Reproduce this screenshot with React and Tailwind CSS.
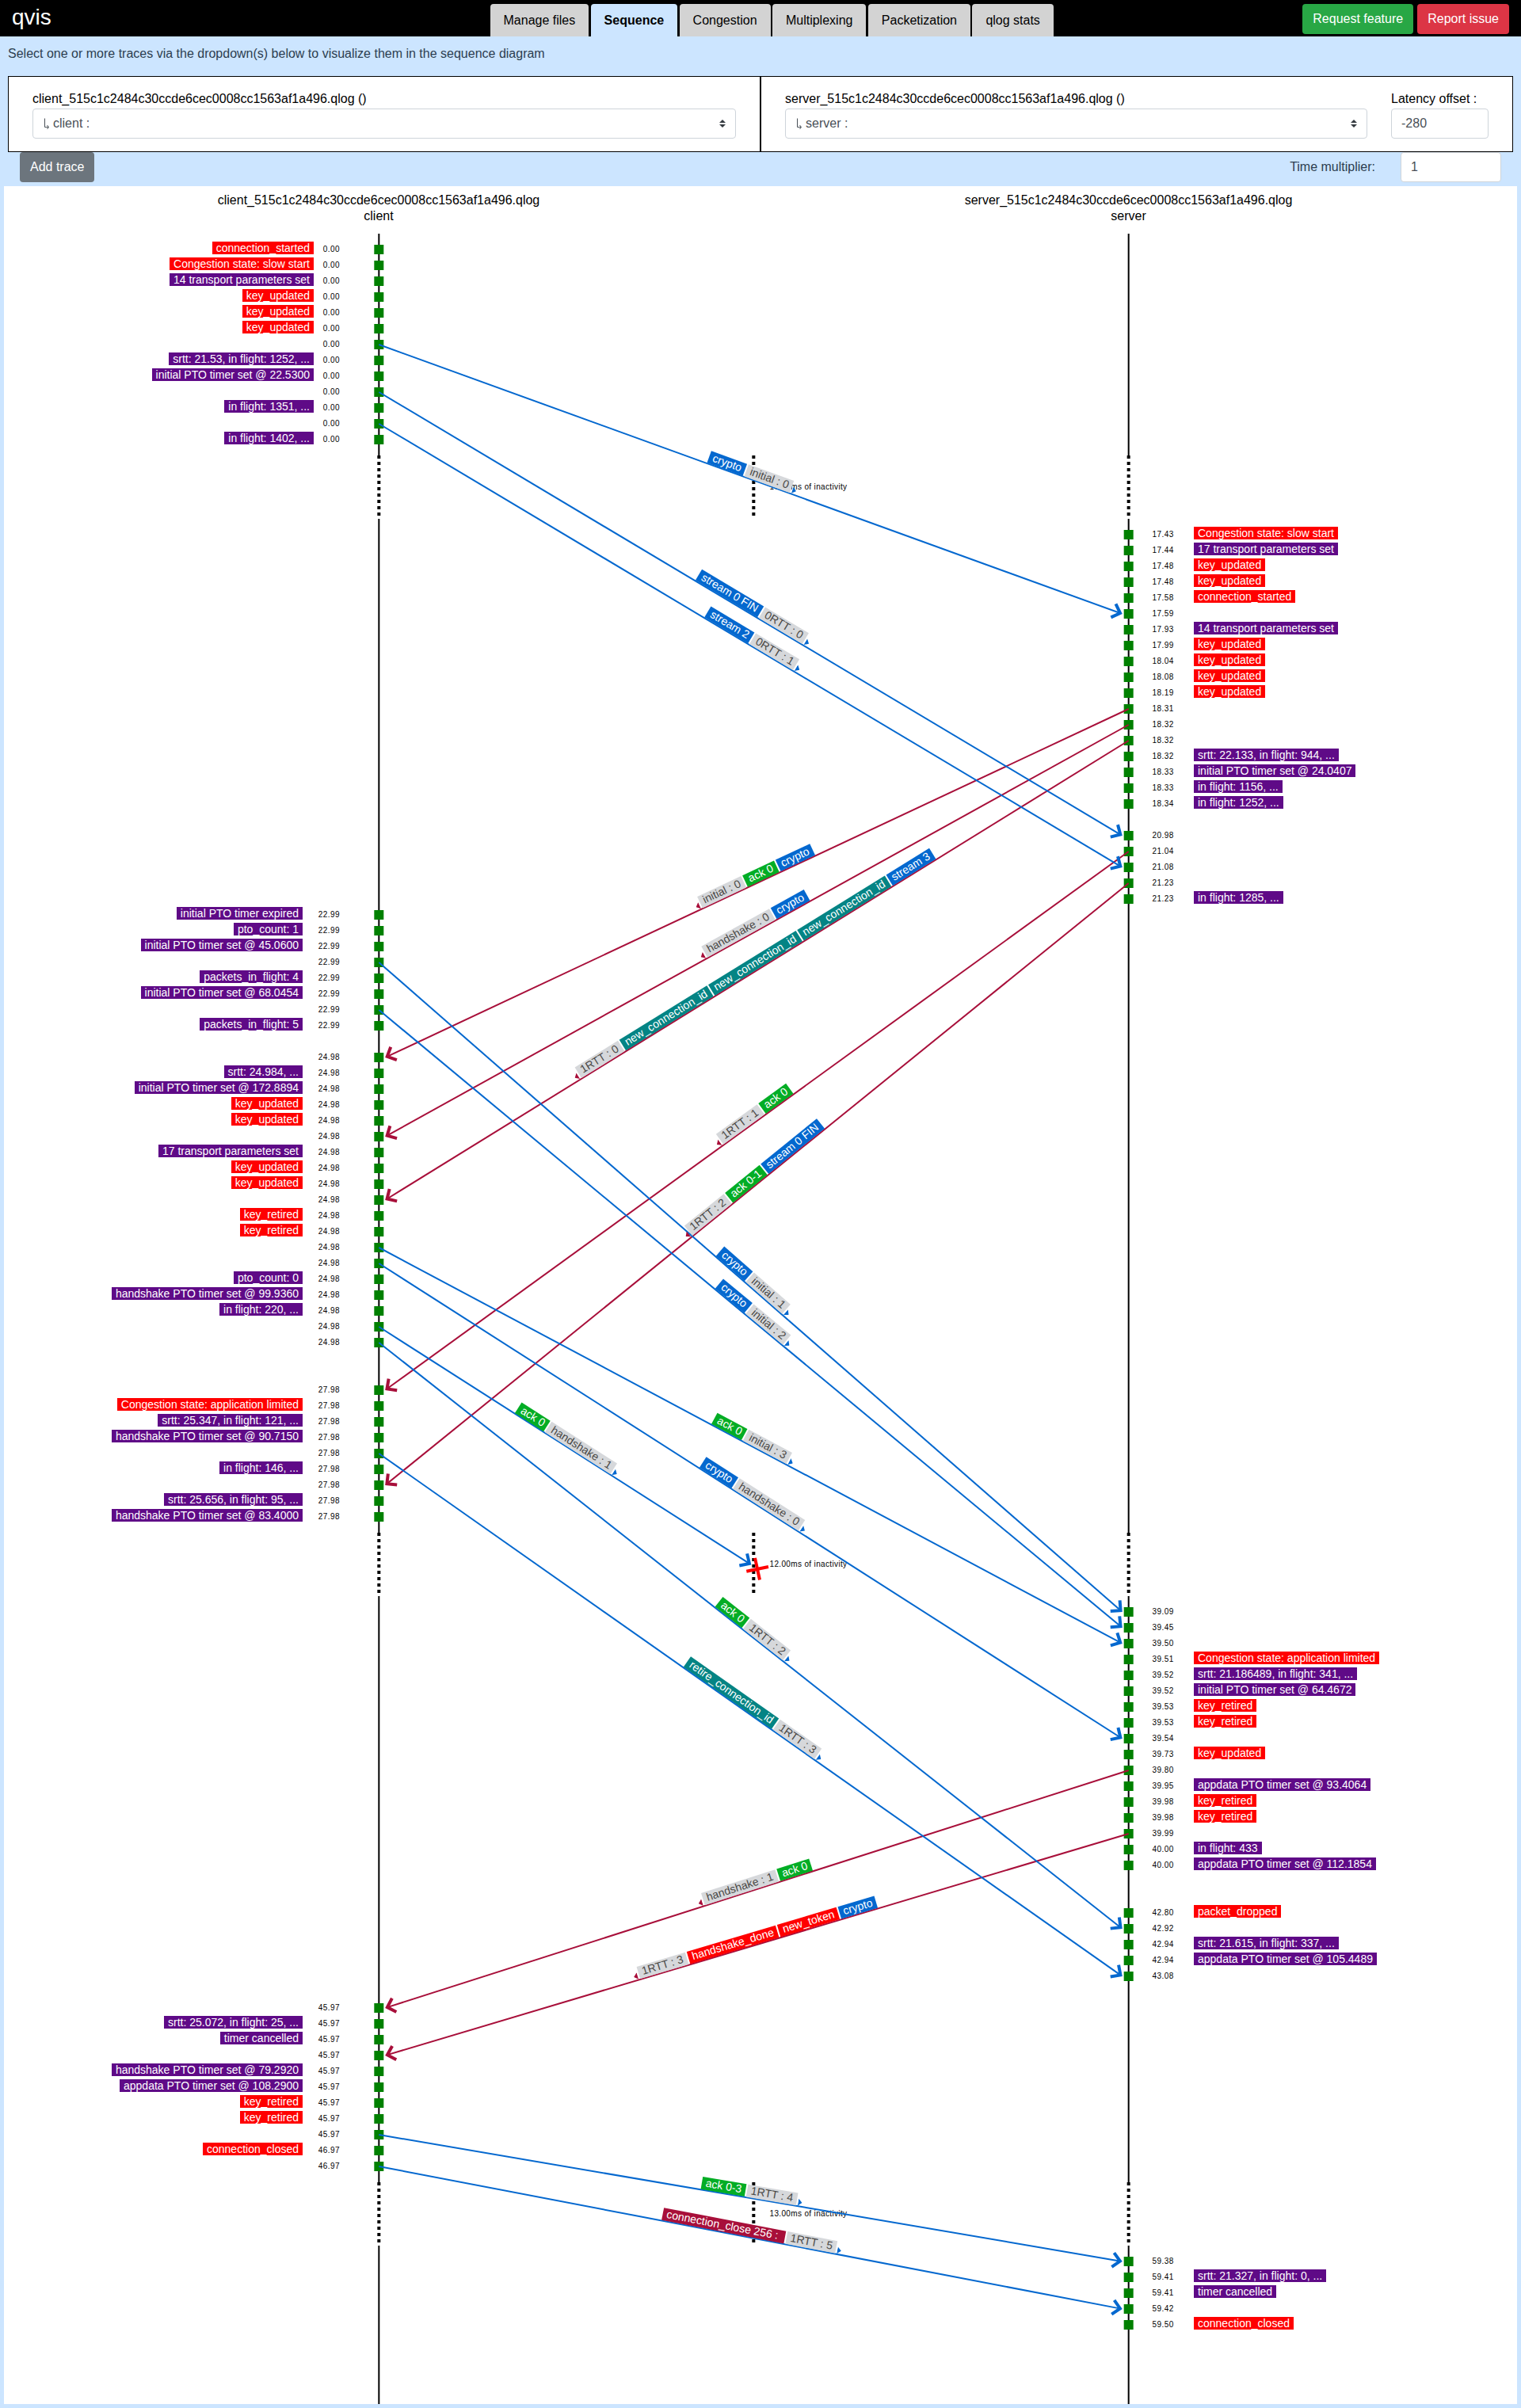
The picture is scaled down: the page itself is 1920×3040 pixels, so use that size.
import React from "react";

const OX = 5;
const OY = 235;
const CLIENT_X = 478.33;
const SERVER_X = 1424.67;
const MID_X = 951.33;

const R = "bg-[#ff0000]";
const P = "bg-[#5f0a87]";
const BLUE = "bg-[#0468cf]";
const GREEN = "bg-[#03ad25]";
const TEAL = "bg-[#048484]";
const WINE = "bg-[#a80f3a]";

const KU = [R, "key_updated"];
const KR = [R, "key_retired"];
const p = (t) => [P, t];
const r = (t) => [R, t];

// Each group: first y, list of [time, label]
const clientGroups = [
  [315, [
    ["0.00", r("connection_started")],
    ["0.00", r("Congestion state: slow start")],
    ["0.00", p("14 transport parameters set")],
    ["0.00", KU], ["0.00", KU], ["0.00", KU],
    ["0.00"],
    ["0.00", p("srtt: 21.53, in flight: 1252, ...")],
    ["0.00", p("initial PTO timer set @ 22.5300")],
    ["0.00"],
    ["0.00", p("in flight: 1351, ...")],
    ["0.00"],
    ["0.00", p("in flight: 1402, ...")],
  ]],
  [1155, [
    ["22.99", p("initial PTO timer expired")],
    ["22.99", p("pto_count: 1")],
    ["22.99", p("initial PTO timer set @ 45.0600")],
    ["22.99"],
    ["22.99", p("packets_in_flight: 4")],
    ["22.99", p("initial PTO timer set @ 68.0454")],
    ["22.99"],
    ["22.99", p("packets_in_flight: 5")],
  ]],
  [1335, [
    ["24.98"],
    ["24.98", p("srtt: 24.984, ...")],
    ["24.98", p("initial PTO timer set @ 172.8894")],
    ["24.98", KU], ["24.98", KU],
    ["24.98"],
    ["24.98", p("17 transport parameters set")],
    ["24.98", KU], ["24.98", KU],
    ["24.98"],
    ["24.98", KR], ["24.98", KR],
    ["24.98"], ["24.98"],
    ["24.98", p("pto_count: 0")],
    ["24.98", p("handshake PTO timer set @ 99.9360")],
    ["24.98", p("in flight: 220, ...")],
    ["24.98"], ["24.98"],
  ]],
  [1755, [
    ["27.98"],
    ["27.98", r("Congestion state: application limited")],
    ["27.98", p("srtt: 25.347, in flight: 121, ...")],
    ["27.98", p("handshake PTO timer set @ 90.7150")],
    ["27.98"],
    ["27.98", p("in flight: 146, ...")],
    ["27.98"],
    ["27.98", p("srtt: 25.656, in flight: 95, ...")],
    ["27.98", p("handshake PTO timer set @ 83.4000")],
  ]],
  [2535, [
    ["45.97"],
    ["45.97", p("srtt: 25.072, in flight: 25, ...")],
    ["45.97", p("timer cancelled")],
    ["45.97"],
    ["45.97", p("handshake PTO timer set @ 79.2920")],
    ["45.97", p("appdata PTO timer set @ 108.2900")],
    ["45.97", KR], ["45.97", KR],
    ["45.97"],
    ["46.97", r("connection_closed")],
    ["46.97"],
  ]],
];

const serverGroups = [
  [675, [
    ["17.43", r("Congestion state: slow start")],
    ["17.44", p("17 transport parameters set")],
    ["17.48", KU], ["17.48", KU],
    ["17.58", r("connection_started")],
    ["17.59"],
    ["17.93", p("14 transport parameters set")],
    ["17.99", KU], ["18.04", KU], ["18.08", KU], ["18.19", KU],
    ["18.31"], ["18.32"], ["18.32"],
    ["18.32", p("srtt: 22.133, in flight: 944, ...")],
    ["18.33", p("initial PTO timer set @ 24.0407")],
    ["18.33", p("in flight: 1156, ...")],
    ["18.34", p("in flight: 1252, ...")],
  ]],
  [1055, [
    ["20.98"], ["21.04"], ["21.08"], ["21.23"],
    ["21.23", p("in flight: 1285, ...")],
  ]],
  [2035, [
    ["39.09"], ["39.45"], ["39.50"],
    ["39.51", r("Congestion state: application limited")],
    ["39.52", p("srtt: 21.186489, in flight: 341, ...")],
    ["39.52", p("initial PTO timer set @ 64.4672")],
    ["39.53", KR], ["39.53", KR],
    ["39.54"],
    ["39.73", KU],
    ["39.80"],
    ["39.95", p("appdata PTO timer set @ 93.4064")],
    ["39.98", KR], ["39.98", KR],
    ["39.99"],
    ["40.00", p("in flight: 433")],
    ["40.00", p("appdata PTO timer set @ 112.1854")],
  ]],
  [2415, [
    ["42.80", r("packet_dropped")],
    ["42.92"],
    ["42.94", p("srtt: 21.615, in flight: 337, ...")],
    ["42.94", p("appdata PTO timer set @ 105.4489")],
    ["43.08"],
  ]],
  [2855, [
    ["59.38"],
    ["59.41", p("srtt: 21.327, in flight: 0, ...")],
    ["59.41", p("timer cancelled")],
    ["59.42"],
    ["59.50", r("connection_closed")],
  ]],
];

const expand = (groups) =>
  groups.flatMap(([y0, rows]) => rows.map(([time, label], i) => ({ y: y0 + i * 20, time, label })));

const clientEvents = expand(clientGroups);
const serverEvents = expand(serverGroups);

const crypto = [BLUE, "crypto"];
const nci = [TEAL, "new_connection_id"];

// Packets from client to server: [y1, y2, packet name, frames]
const sent = [
  [435, 775, "initial : 0", [crypto]],
  [495, 1055, "0RTT : 0", [[BLUE, "stream 0 FIN"]]],
  [535, 1095, "0RTT : 1", [[BLUE, "stream 2"]]],
  [1215, 2035, "initial : 1", [crypto]],
  [1275, 2055, "initial : 2", [crypto]],
  [1575, 2075, "initial : 3", [[GREEN, "ack 0"]]],
  [1595, 2195, "handshake : 0", [crypto]],
  [1675, 1975.4, "handshake : 1", [[GREEN, "ack 0"]], 948.3],
  [1695, 2435, "1RTT : 2", [[GREEN, "ack 0"]]],
  [1835, 2495, "1RTT : 3", [[TEAL, "retire_connection_id"]]],
  [2695, 2855, "1RTT : 4", [[GREEN, "ack 0-3"]]],
  [2735, 2915, "1RTT : 5", [[WINE, "connection_close 256 :\u00a0"]]],
].map(([y1, y2, name, frames, x2]) => ({ dir: 1, x1: CLIENT_X, y1, x2: x2 || 1416.7, y2, name, frames }));

const received = [
  [895, 1335, "initial : 0", [[GREEN, "ack 0"], crypto]],
  [915, 1435, "handshake : 0", [crypto]],
  [935, 1515, "1RTT : 0", [nci, nci, nci, [BLUE, "stream 3"]]],
  [1075, 1755, "1RTT : 1", [[GREEN, "ack 0"]]],
  [1115, 1875, "1RTT : 2", [[GREEN, "ack 0-1"], [BLUE, "stream 0 FIN"]]],
  [2235, 2535, "handshake : 1", [[GREEN, "ack 0"]]],
  [2315, 2595, "1RTT : 3", [[R, "handshake_done"], [R, "new_token"], crypto]],
].map(([y1, y2, name, frames]) => ({ dir: -1, x1: SERVER_X, y1, x2: 486.2, y2, name, frames }));

const packets = [...received, ...sent];

const gaps = [
  [575, "17.00ms of inactivity"],
  [1935, "12.00ms of inactivity"],
  [2755, "13.00ms of inactivity"],
];

function Lane({ x }) {
  const solid = [[295, 575], [655, 1935], [2015, 2755], [2835, 3035]];
  return (
    <g>
      {solid.map(([a, b]) => (
        <line key={a} x1={x} x2={x} y1={a} y2={b} className="stroke-black stroke-2" />
      ))}
      {gaps.map(([y]) => (
        <line key={y} x1={x} x2={x} y1={y} y2={y + 80} strokeDasharray="4 4" className="stroke-black stroke-4" />
      ))}
    </g>
  );
}

function Arrow({ packet }) {
  const { dir, x1, y1, x2, y2 } = packet;
  const angle = (Math.atan2(y2 - y1, x2 - x1) * 180) / Math.PI;
  return (
    <g className={dir > 0 ? "fill-none stroke-[#0468cf]" : "fill-none stroke-[#a80f3a]"}>
      <line x1={x1} y1={y1} x2={x2 - dir * 2} y2={y2 - (dir * 2 * (y2 - y1)) / (x2 - x1)} strokeWidth="2" />
      <polyline
        points="-12,-9 -2.8,0 -12,9"
        strokeWidth="4"
        transform={`translate(${x2} ${y2}) rotate(${angle})`}
      />
    </g>
  );
}

function PacketLabel({ packet }) {
  const { dir, x1, y1, x2, y2, name, frames } = packet;
  const angle = (Math.atan((y2 - y1) / (x2 - x1)) * 180) / Math.PI;
  const nameChip = <span className="bg-[#d6d8db] px-[5px] text-[#4a4846]">{name}</span>;
  const frameChips = frames.map(([bg, text], i) => (
    <span key={i} className={`${bg} px-[5px] text-white`}>{text}</span>
  ));
  return (
    <div
      className="absolute flex origin-bottom gap-[2px] pb-px text-sm leading-[15.5px] whitespace-nowrap"
      style={{
        left: (x1 + x2) / 2 - OX,
        top: (y1 + y2) / 2 - OY,
        transform: `translate(-50%, -100%) rotate(${angle}deg)`,
      }}
    >
      {dir > 0 ? (
        <>
          {frameChips}
          {nameChip}
          <svg viewBox="0 0 5 9" className="h-[9px] w-[5px] self-end fill-[#0468cf]"><path d="M0 0L5 4.5L0 9z" /></svg>
        </>
      ) : (
        <>
          <svg viewBox="0 0 5 9" className="h-[9px] w-[5px] self-end fill-[#a80f3a]"><path d="M5 0L0 4.5L5 9z" /></svg>
          {nameChip}
          {frameChips}
        </>
      )}
    </div>
  );
}

function Diagram() {
  return (
    <section className="relative mx-[5px] mt-[5px] h-[2800px] bg-white text-black">
      <div className="grid grid-cols-2 pt-2 text-center leading-5">
        <h2 className="-ml-[9px]">client_515c1c2484c30ccde6cec0008cc1563af1a496.qlog<br />client</h2>
        <h2 className="mr-[26px]">server_515c1c2484c30ccde6cec0008cc1563af1a496.qlog<br />server</h2>
      </div>
      <svg viewBox="5 235 1910 2800" className="absolute inset-0 h-[2800px] w-[1910px]">
        <Lane x={CLIENT_X} />
        <Lane x={SERVER_X} />
        {gaps.map(([y, text]) => (
          <g key={y}>
            <line x1={MID_X} x2={MID_X} y1={y} y2={y + 80} strokeDasharray="4 4" className="stroke-black stroke-4" />
            <text x={971.5} y={y + 43} className="fill-black text-[10px] tracking-[0.35px]">{text}</text>
          </g>
        ))}
        {clientEvents.map((e) => (
          <g key={e.y}>
            <rect x={CLIENT_X - 6} y={e.y - 6} width="12" height="12" className="fill-[#008000]" />
            <text x={429} y={e.y + 3} textAnchor="end" className="fill-black text-[10px] tracking-[0.45px]">{e.time}</text>
          </g>
        ))}
        {serverEvents.map((e) => (
          <g key={e.y}>
            <rect x={SERVER_X - 6} y={e.y - 6} width="12" height="12" className="fill-[#008000]" />
            <text x={1454.6} y={e.y + 3} className="fill-black text-[10px] tracking-[0.45px]">{e.time}</text>
          </g>
        ))}
        {packets.map((k) => <Arrow key={`${k.dir}-${k.y1}`} packet={k} />)}
        <path d="M942.3 1983.7L970 1978M953 1966.8L959 1994.5" className="fill-none stroke-[#ff0000] stroke-4" />
      </svg>
      {clientEvents.filter((e) => e.label).map((e) => (
        <span
          key={e.y}
          className={`${e.label[0]} absolute h-4 px-[5px] text-sm leading-4 whitespace-nowrap text-white`}
          style={{ top: e.y - 10 - OY, right: e.time.length === 4 ? 1519 : 1533 }}
        >
          {e.label[1]}
        </span>
      ))}
      {serverEvents.filter((e) => e.label).map((e) => (
        <span
          key={e.y}
          className={`${e.label[0]} absolute h-4 px-[5px] text-sm leading-4 whitespace-nowrap text-white`}
          style={{ top: e.y - 10 - OY, left: 1507 - OX }}
        >
          {e.label[1]}
        </span>
      ))}
      {packets.map((k) => <PacketLabel key={`${k.dir}-${k.y1}`} packet={k} />)}
    </section>
  );
}

function Select({ text }) {
  return (
    <div className="flex h-[38px] items-center rounded border border-[#ced4da] bg-white pr-3 pl-[13px] text-[#495057]">
      <svg viewBox="0 0 8 16" className="mr-1 h-4 w-2 fill-none stroke-[#495057] stroke-1"><path d="M1.5 1.5V12.5H6M4.5 10L6.5 12.5L4.5 15" /></svg>
      <span className="flex-1">{text}</span>
      <svg viewBox="0 0 4 5" className="h-[10px] w-2 fill-[#343a40]"><path d="M2 0L0 2h4zm0 5L0 3h4z" /></svg>
    </div>
  );
}

const tabs = ["Manage files", "Sequence", "Congestion", "Multiplexing", "Packetization", "qlog stats"];

export default function App() {
  return (
    <div className="h-[3040px] w-[1920px] overflow-hidden bg-[#cce5ff] font-['Liberation_Sans',Arial,sans-serif] text-base text-[#2c3e50]">
      <header className="flex h-[46px] items-start bg-black">
        <h1 className="w-[618.5px] pt-[5px] pl-[15px] text-[28px] leading-[34px] text-white">qvis</h1>
        <nav className="flex flex-1 gap-[2.4px] pt-[5px]">
          {tabs.map((t) => (
            <a
              key={t}
              className={
                t === "Sequence"
                  ? "h-[41px] rounded-t bg-[#cce5ff] px-[17px] pt-[9px] font-bold text-black"
                  : "h-[41px] rounded-t bg-[#d3d3d3] px-[17px] pt-[9px] text-black"
              }
            >
              {t}
            </a>
          ))}
        </nav>
        <div className="flex gap-[5px] pt-[5px] pr-[15px] text-white">
          <button className="h-[38px] rounded bg-[#28a745] px-[13px]">Request feature</button>
          <button className="h-[38px] rounded bg-[#dc3545] px-[13px]">Report issue</button>
        </div>
      </header>
      <p className="h-[50px] pt-[10px] pl-[10px]">
        Select one or more traces via the dropdown(s) below to visualize them in the sequence diagram
      </p>
      <div className="mx-[10px] grid h-24 grid-cols-2 text-black">
        <div className="border border-black bg-white px-[30px] pt-4">
          <div>client_515c1c2484c30ccde6cec0008cc1563af1a496.qlog ()</div>
          <Select text="client :" />
        </div>
        <div className="flex gap-[30px] border border-black bg-white px-[30px] pt-4">
          <div className="flex-1">
            <div>server_515c1c2484c30ccde6cec0008cc1563af1a496.qlog ()</div>
            <Select text="server :" />
          </div>
          <div className="w-[123px]">
            <div>Latency offset :</div>
            <div className="flex h-[38px] items-center rounded border border-[#ced4da] px-3 text-[#495057]">-280</div>
          </div>
        </div>
      </div>
      <div className="flex h-[38px] items-center pr-[25px] pl-[25px]">
        <button className="h-[38px] rounded bg-[#6c757d] px-[13px] text-white">Add trace</button>
        <span className="mr-8 ml-auto">Time multiplier:</span>
        <div className="flex h-[38px] w-[127px] items-center rounded border border-[#ced4da] bg-white px-3 text-[#495057]">1</div>
      </div>
      <Diagram />
    </div>
  );
}
